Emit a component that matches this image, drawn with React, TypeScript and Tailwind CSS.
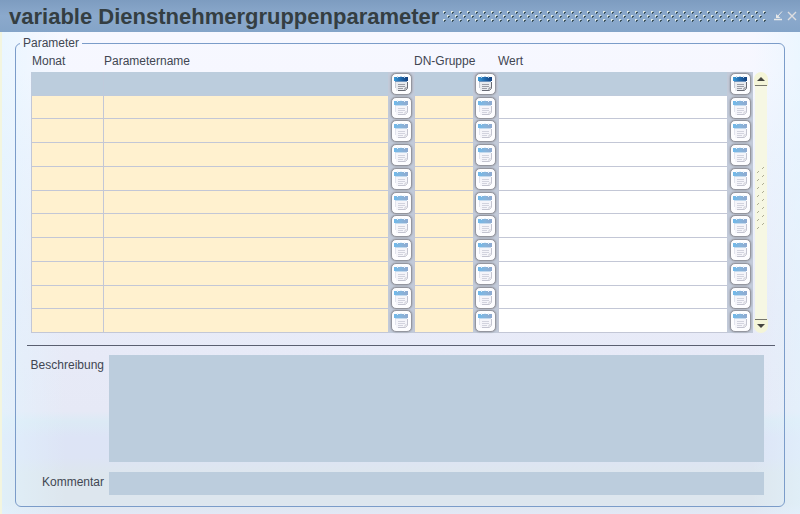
import React from "react";

const rows = Array.from({ length: 11 }, (_, i) => i);

function ListIcon({ active }: { active: boolean }) {
  return (
    <svg viewBox="0 0 15 16" className="h-4 w-[15px]" aria-hidden="true">
      <defs>
        <linearGradient id={active ? "bar-on" : "bar-off"} x1="0" x2="1" y1="0" y2="0">
          <stop offset="0" stopColor={active ? "#3b9bd8" : "#6fb9ea"} />
          <stop offset="0.5" stopColor={active ? "#2269ac" : "#86b4dc"} />
          <stop offset="1" stopColor={active ? "#143f7c" : "#8fa9cf"} />
        </linearGradient>
      </defs>
      <path d="M2 5h11v8l-2 2H2z" fill={active ? "#e9ebef" : "#f5f5fa"} />
      <rect x="0" y="1" width="14" height="4" fill={active ? "url(#bar-on)" : "url(#bar-off)"} />
      <path d="M3 0h1v2H3zM6 0h2v1H6zM10 0h1v2h-1z" fill={active ? "#b9d4ea" : "#e6f1fa"} />
      <path d="M1 5.5h12" stroke={active ? "#6d93bd" : "#c4daee"} />
      <path d="M4 8.5h7M4 10.5h7M4 12.5h5" stroke={active ? "#9b9da6" : "#d2d3de"} />
      <path d="M13.5 6v6.5l-2 2H4" fill="none" stroke={active ? "#686b75" : "#c3c4d0"} />
      <path d="M1.5 6v6" stroke={active ? "#c7ccd6" : "#e2e4ee"} />
      <path d="M11 14.5v-2.5h2.5" fill="#ffffff" stroke={active ? "#85878f" : "#cdced8"} />
    </svg>
  );
}

function PickCell({ row, name }: { row: number; name: string }) {
  return (
    <td className="bg-[#c2cad9] p-0">
      <button
        type="button"
        aria-label={`${name} auswählen, Zeile ${row + 1}`}
        className="mx-auto flex h-[22px] w-[21px] items-center justify-center rounded-[5px] border border-[#94969f] bg-[#fdfdff] shadow-[0_0_2px_#85858d]"
      >
        <ListIcon active={row === 0} />
      </button>
    </td>
  );
}

function FieldCell({ row, name, color }: { row: number; name: string; color: string }) {
  return (
    <td className={`border-b border-l p-0 ${row % 4 === 1 ? "h-[23px]" : "h-6"} ${row === 0 ? "border-[#bfcbdc] bg-[#bccddd]" : `border-[#c3c7d6] ${color}`}`}>
      <input
        type="text"
        aria-label={`${name}, Zeile ${row + 1}`}
        className="block h-[22px] w-full bg-transparent px-1 outline-none"
      />
    </td>
  );
}

export default function App() {
  return (
    <main className="flex min-h-screen flex-col border-l-2 border-[#f3f5df] bg-[linear-gradient(to_right,#e2f5ff99,#e2f5ff00_8%,#e2f5ff00_94%,#e2f5ff88),linear-gradient(to_bottom,#f8f8ff_0%,#f6f7ff_14%,#eef2fd_30%,#e8ebf8_60%,#e6e9f6_80%,#dceaf5_82%,#dde4f6_85%,#dde4f5_89%,#dde6ee_92%,#dde6ee_98%,#e2e8f6_100%)] font-['Liberation_Sans',Arial,sans-serif] text-[12px] text-[#414652]">
      <header className="-ml-0.5 flex h-8 items-center bg-[linear-gradient(to_bottom,#7d9cc0,#8ba9cc_50%,#84a4c8)] pr-[3px] pl-[9px]">
        <h1 className="pt-0.5 text-[22px] leading-[30px] font-bold whitespace-nowrap text-[#343e42]">
          variable Dienstnehmergruppenparameter
        </h1>
        <svg className="mr-1.5 ml-1 h-[11px] min-w-0 flex-1" aria-hidden="true">
          <defs>
            <pattern id="grip" width="8" height="8" patternUnits="userSpaceOnUse">
              <path d="M0 0h2v1H0zM0 1h1v1H0zM4 4h2v1H4zM4 5h1v1H4z" fill="#dfe8e2" />
              <path d="M1 1h2v1H1zM1 2h1v1H1zM5 5h2v1H5zM5 6h1v1H5z" fill="#3f5560" />
            </pattern>
          </defs>
          <rect width="100%" height="11" fill="url(#grip)" />
        </svg>
        <button type="button" aria-label="Minimieren">
          <svg viewBox="0 0 10 10" className="size-2.5" fill="none" stroke="#e7e8e8" aria-hidden="true">
            <path d="M9 0.5L5 5" />
            <path d="M3 3v4h4.5z" fill="#e7e8e8" stroke="none" />
            <path d="M1 8.5h8" strokeWidth="1.5" />
          </svg>
        </button>
        <button type="button" aria-label="Schließen" className="ml-1">
          <svg viewBox="0 0 10 10" className="size-2.5" fill="none" stroke="#dddde0" strokeWidth="1.4" aria-hidden="true">
            <path d="M1 1l8 8M9 1L1 9" />
          </svg>
        </button>
      </header>

      <form className="flex flex-1 flex-col pt-1 pr-[15px] pb-[7px] pl-[13px]">
        <fieldset className="flex-1 rounded-[6px] border border-[#7b9cc9]">
          <legend className="ml-1 px-[3px] leading-[14px]">Parameter</legend>

          <div className="flex pr-4 pl-[15px]">
            <table className="flex-1 table-fixed border-separate border-spacing-0">
              <colgroup>
                <col className="w-[72px]" />
                <col />
                <col className="w-[26px]" />
                <col className="w-[59px]" />
                <col className="w-[25px]" />
                <col className="w-[229px]" />
                <col className="w-[26px]" />
              </colgroup>
              <thead>
                <tr className="h-[22px] text-left align-top leading-[22px] whitespace-nowrap">
                  <th scope="col" className="p-0 pl-px font-normal">Monat</th>
                  <th scope="col" colSpan={2} className="p-0 pl-px font-normal">Parametername</th>
                  <th scope="col" colSpan={2} className="p-0 font-normal">DN-Gruppe</th>
                  <th scope="col" colSpan={2} className="p-0 font-normal">Wert</th>
                </tr>
              </thead>
              <tbody>
                {rows.map((row) => (
                  <tr key={row}>
                    <FieldCell row={row} name="Monat" color="bg-[#fff1cf]" />
                    <FieldCell row={row} name="Parametername" color="bg-[#fff1cf]" />
                    <PickCell row={row} name="Parametername" />
                    <FieldCell row={row} name="DN-Gruppe" color="bg-[#fff1cf]" />
                    <PickCell row={row} name="DN-Gruppe" />
                    <FieldCell row={row} name="Wert" color="bg-white" />
                    <PickCell row={row} name="Wert" />
                  </tr>
                ))}
              </tbody>
            </table>

            <div className="mt-[22px] ml-px flex w-3.5 flex-col">
              <button type="button" aria-label="Nach oben" className="flex h-3.5 items-center justify-center rounded-t-full bg-[#f4f5d8]">
                <svg viewBox="0 0 12 14" className="h-3.5 w-3" aria-hidden="true">
                  <path d="M2 9l4-4 4 4z" fill="#44443e" />
                  <path d="M0 13h12v1H0z" fill="#77776c" />
                </svg>
              </button>
              <div className="mx-px flex flex-1 items-center justify-center bg-[#f6f7e3] pb-2.5">
                <svg className="h-[62px] w-2" aria-hidden="true">
                  <defs>
                    <pattern id="thumb" width="8" height="8" patternUnits="userSpaceOnUse">
                      <path d="M5 1h1v1H5zM6 0h1v1H6zM0 5h1v1H0zM1 4h1v1H1z" fill="#adad94" />
                    </pattern>
                  </defs>
                  <rect width="8" height="62" fill="url(#thumb)" />
                </svg>
              </div>
              <button type="button" aria-label="Nach unten" className="flex h-3.5 items-center justify-center rounded-b-full bg-[#f4f5d8]">
                <svg viewBox="0 0 12 14" className="h-3.5 w-3" aria-hidden="true">
                  <path d="M2 5l4 4 4-4z" fill="#44443e" />
                  <path d="M0 0h12v1H0z" fill="#77776c" />
                </svg>
              </button>
            </div>
          </div>

          <hr className="mt-3 mr-[9px] mb-[9px] ml-[11px] border-t border-[#5a5f70]" />

          <div className="grid grid-cols-[88px_1fr] gap-x-[5px] gap-y-2.5 pr-5">
            <label htmlFor="beschreibung" className="pt-0.5 text-right leading-4">Beschreibung</label>
            <textarea id="beschreibung" className="block h-[107px] w-full resize-none bg-[#bccddd] p-1 outline-none" />
            <label htmlFor="kommentar" className="pt-0.5 text-right leading-4">Kommentar</label>
            <input id="kommentar" type="text" className="h-[23px] w-full bg-[#bccddd] px-1 outline-none" />
          </div>
        </fieldset>
      </form>
    </main>
  );
}
